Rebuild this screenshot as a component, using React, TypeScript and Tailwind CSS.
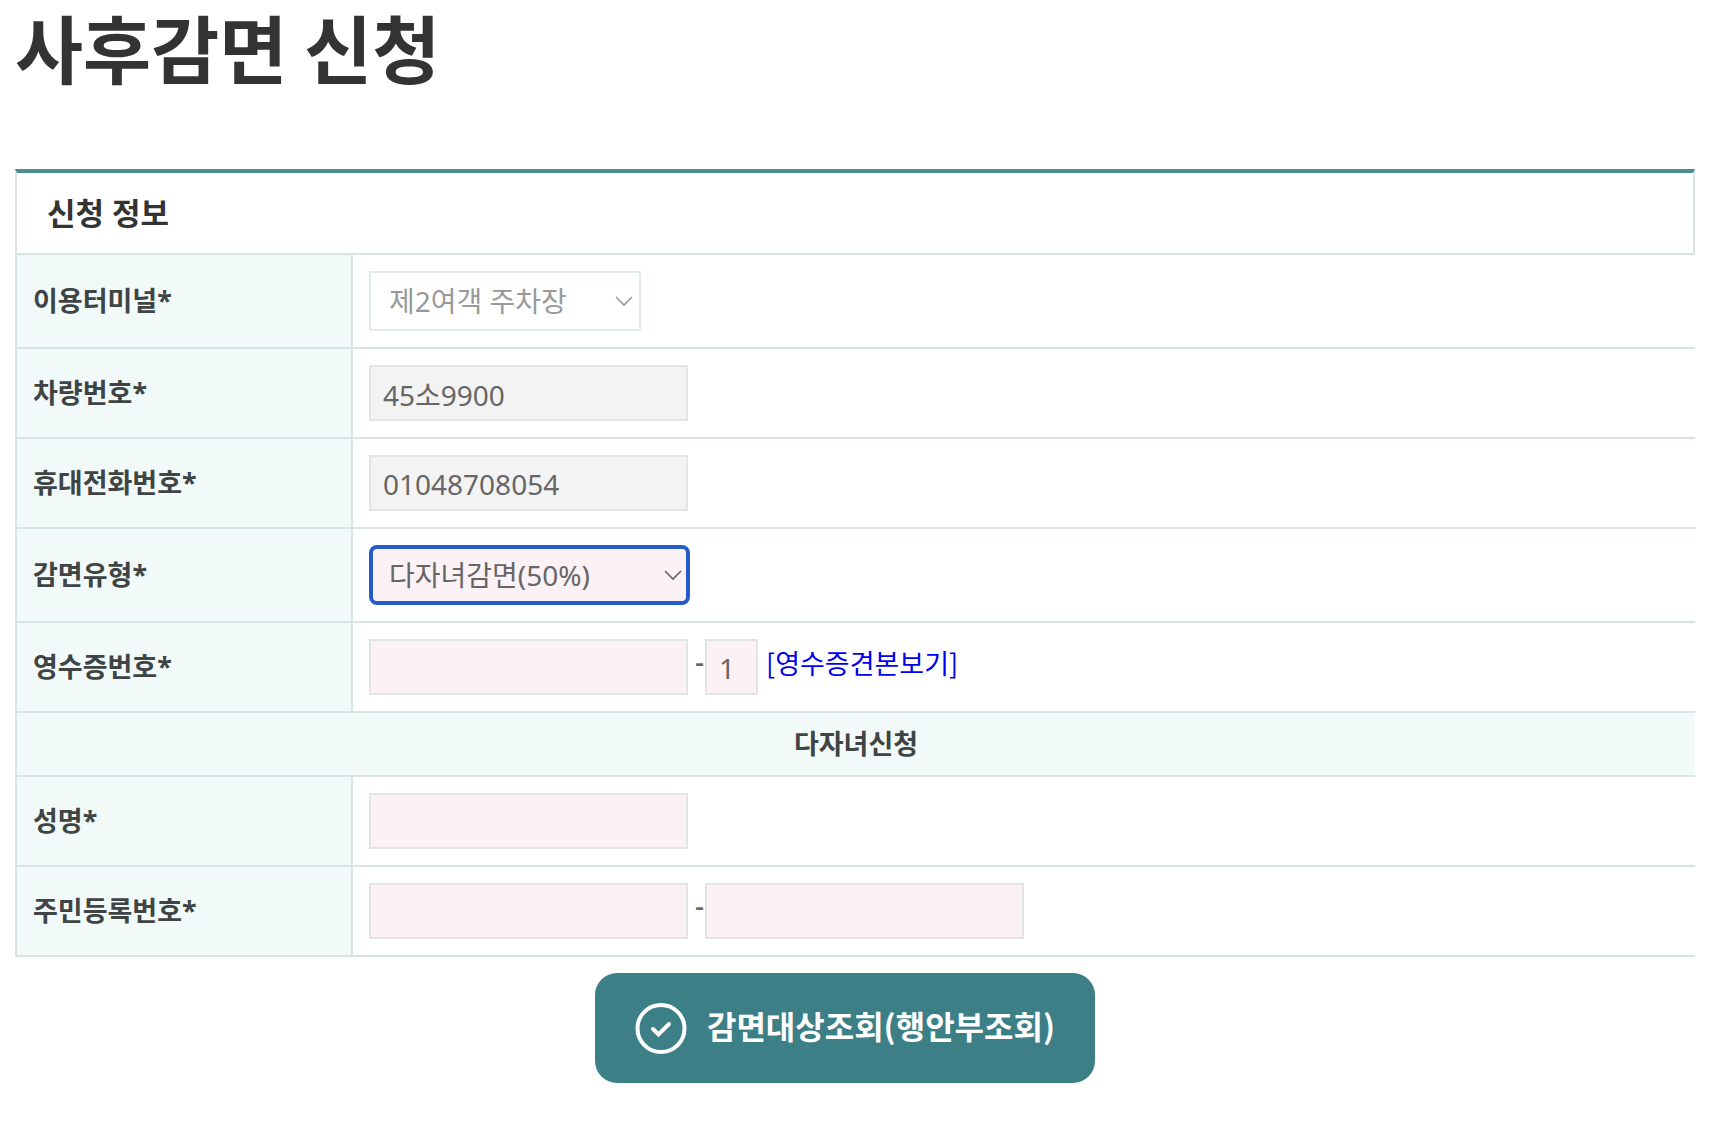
import { useState } from "react";
import type { InputHTMLAttributes, ReactNode, SelectHTMLAttributes } from "react";

const fieldBase = "h-14 border-2 border-[#e4e4e4] pl-3 pt-0.5 pb-0 pr-2 text-[28px] text-[#666] outline-none";

function TextField({ className = "", ...props }: InputHTMLAttributes<HTMLInputElement>) {
  return <input type="text" className={`${fieldBase} ${className}`} {...props} />;
}

function SelectField({
  className = "",
  chevronColor,
  children,
  ...props
}: SelectHTMLAttributes<HTMLSelectElement> & { chevronColor: string; children: ReactNode }) {
  return (
    <div className="relative w-fit">
      <select
        className={`block h-[60px] appearance-none pr-9 text-[28px] outline-none disabled:opacity-100 ${className}`}
        {...props}
      >
        {children}
      </select>
      <svg
        className="pointer-events-none absolute right-2 top-1/2 -translate-y-1/2"
        width="18"
        height="12"
        viewBox="0 0 18 12"
        fill="none"
        stroke={chevronColor}
        strokeWidth="1.6"
        aria-hidden="true"
      >
        <path d="M1 2 L9 10 L17 2" />
      </svg>
    </div>
  );
}

function Dash() {
  return <span className="w-[17px] pr-px pb-3 text-right text-[28px] leading-9 font-medium">-</span>;
}

function Row({ label, htmlFor, children }: { label: string; htmlFor: string; children: ReactNode }) {
  return (
    <tr>
      <th
        scope="row"
        className="border-b-2 border-l-2 border-[#d6e4e4] bg-[#f1faf9] px-4 text-left text-[27px] leading-9 font-bold text-[#3f4444]"
      >
        <label htmlFor={htmlFor}>{label}*</label>
      </th>
      <td className="border-b-2 border-l-2 border-[#d6e4e4] p-4">
        <div className="flex items-center">{children}</div>
      </td>
    </tr>
  );
}

export default function App() {
  const [type, setType] = useState("multi");
  const [receipt, setReceipt] = useState("");
  const [receiptSub, setReceiptSub] = useState("1");
  const [name, setName] = useState("");
  const [rrnFront, setRrnFront] = useState("");
  const [rrnBack, setRrnBack] = useState("");

  return (
    <main className="bg-white pr-[31px] pl-[15px] font-['Noto_Sans','Noto_Sans_CJK_KR',sans-serif] text-[#666]">
      <h1 className="font-['Noto_Sans_CJK_KR',sans-serif] text-[74px] leading-[92px] font-bold text-[#333]">
        사후감면 신청
      </h1>
      <form className="mt-[77px]" onSubmit={(e) => e.preventDefault()}>
        <table className="w-full table-fixed border-separate border-spacing-0">
          <colgroup>
            <col className="w-1/5" />
            <col />
          </colgroup>
          <thead>
            <tr>
              <th
                colSpan={2}
                className="h-[86px] border-x-2 border-t-4 border-b-2 border-x-[#d6e4e4] border-t-[#4e8c90] border-b-[#d6e4e4] px-[30px] text-left text-[31px] leading-10 font-bold text-[#333]"
              >
                신청 정보
              </th>
            </tr>
          </thead>
          <tbody>
            <Row label="이용터미널" htmlFor="terminal">
              <SelectField
                id="terminal"
                disabled
                chevronColor="#999"
                className="w-[272px] border-2 border-[#e0ebeb] bg-white pl-[18px] text-[#999]"
              >
                <option>제2여객 주차장</option>
              </SelectField>
            </Row>
            <Row label="차량번호" htmlFor="car">
              <TextField id="car" readOnly value="45소9900" className="w-[319px] bg-[#f3f3f3]" />
            </Row>
            <Row label="휴대전화번호" htmlFor="phone">
              <TextField id="phone" readOnly value="01048708054" className="w-[319px] bg-[#f3f3f3]" />
            </Row>
            <Row label="감면유형" htmlFor="type">
              <SelectField
                id="type"
                value={type}
                onChange={(e) => setType(e.target.value)}
                chevronColor="#666"
                className="w-[321px] rounded-lg border-4 border-[#265cc8] bg-[#fcf1f5] pl-4 text-[#666]"
              >
                <option value="multi">다자녀감면(50%)</option>
              </SelectField>
            </Row>
            <Row label="영수증번호" htmlFor="receipt">
              <TextField
                id="receipt"
                value={receipt}
                onChange={(e) => setReceipt(e.target.value)}
                className="w-[319px] bg-[#fcf1f5]"
              />
              <Dash />
              <TextField
                aria-label="영수증번호 뒷자리"
                value={receiptSub}
                onChange={(e) => setReceiptSub(e.target.value)}
                className="w-[53px] bg-[#fcf1f5]"
              />
              <a
                href="#receipt-sample"
                className="ml-2 pb-2 font-['Noto_Sans_CJK_KR',sans-serif] text-[27px] leading-9 text-[#0000ee]"
              >
                [영수증견본보기]
              </a>
            </Row>
            <tr>
              <th
                colSpan={2}
                className="h-16 border-b-2 border-l-2 border-[#d6e4e4] bg-[#f1faf9] text-center text-[27px] leading-9 font-bold text-[#3f4444]"
              >
                다자녀신청
              </th>
            </tr>
            <Row label="성명" htmlFor="name">
              <TextField
                id="name"
                value={name}
                onChange={(e) => setName(e.target.value)}
                className="w-[319px] bg-[#fcf1f5]"
              />
            </Row>
            <Row label="주민등록번호" htmlFor="rrn">
              <TextField
                id="rrn"
                value={rrnFront}
                onChange={(e) => setRrnFront(e.target.value)}
                className="w-[319px] bg-[#fcf1f5]"
              />
              <Dash />
              <TextField
                aria-label="주민등록번호 뒷자리"
                value={rrnBack}
                onChange={(e) => setRrnBack(e.target.value)}
                className="w-[319px] bg-[#fcf1f5]"
              />
            </Row>
          </tbody>
        </table>
        <div className="mt-4 flex justify-center pr-5">
          <button
            type="submit"
            className="flex h-[110px] items-center gap-5 rounded-[22px] bg-[#3c7f87] px-10 font-['Noto_Sans_CJK_KR',sans-serif] text-[32px] leading-10 font-bold text-white"
          >
            <svg width="52" height="52" viewBox="0 0 52 52" fill="none" stroke="currentColor" aria-hidden="true">
              <circle cx="26" cy="26.5" r="23.5" strokeWidth="4" />
              <path d="M18 27 L23.5 32.5 L34 22" strokeWidth="4" strokeLinecap="round" />
            </svg>
            <span className="pb-1.5">감면대상조회(행안부조회)</span>
          </button>
        </div>
      </form>
    </main>
  );
}
